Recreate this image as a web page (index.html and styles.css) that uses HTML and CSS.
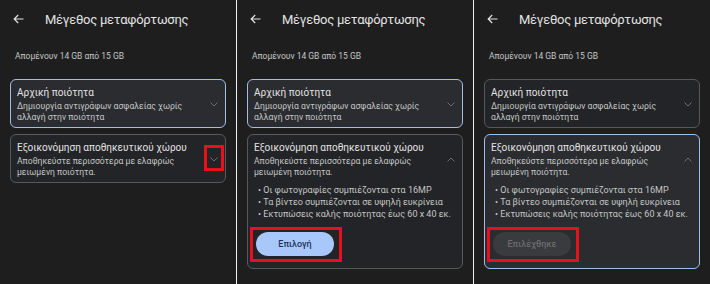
FILE: index.html
```html
<!DOCTYPE html>
<html lang="el">
<head>
    <meta charset="UTF-8">
    <meta name="viewport" content="width=device-width, initial-scale=1.0">
    <title>Μέγεθος μεταφόρτωσης</title>
    <link rel="stylesheet" href="styles.css">
</head>
<body>
    <!-- step 1: both collapsed, first selected -->
    <section class="screen">
        <div class="topbar">
            <svg class="back" width="11" height="10" viewBox="0 0 11 10"><path d="M10.5 5H1.2M5.2 1L1.2 5l4 4" fill="none" stroke="#e3e3e3" stroke-width="1.2"/></svg>
            <h1>Μέγεθος μεταφόρτωσης</h1>
        </div>
        <p class="quota">Απομένουν 14 GB από 15 GB</p>

        <div class="card selected">
            <div class="card-head">
                <div class="card-text">
                    <div class="card-title">Αρχική ποιότητα</div>
                    <div class="card-sub">Δημιουργία αντιγράφων ασφαλείας χωρίς αλλαγή στην ποιότητα</div>
                </div>
                <span class="chev"><svg width="8" height="5" viewBox="0 0 8 5"><path d="M0.5 0.5L4 4l3.5-3.5" fill="none" stroke="#6c6d70" stroke-width="1"/></svg></span>
            </div>
        </div>

        <div class="card">
            <div class="card-head">
                <div class="card-text">
                    <div class="card-title">Εξοικονόμηση αποθηκευτικού χώρου</div>
                    <div class="card-sub">Αποθηκεύστε περισσότερα με ελαφρώς μειωμένη ποιότητα.</div>
                </div>
                <span class="chev mark mark-chev"><svg width="8" height="5" viewBox="0 0 8 5"><path d="M0.5 0.5L4 4l3.5-3.5" fill="none" stroke="#6c6d70" stroke-width="1"/></svg></span>
            </div>
        </div>
    </section>

    <!-- step 2: second option expanded -->
    <section class="screen">
        <div class="topbar">
            <svg class="back" width="11" height="10" viewBox="0 0 11 10"><path d="M10.5 5H1.2M5.2 1L1.2 5l4 4" fill="none" stroke="#e3e3e3" stroke-width="1.2"/></svg>
            <h1>Μέγεθος μεταφόρτωσης</h1>
        </div>
        <p class="quota">Απομένουν 14 GB από 15 GB</p>

        <div class="card selected">
            <div class="card-head">
                <div class="card-text">
                    <div class="card-title">Αρχική ποιότητα</div>
                    <div class="card-sub">Δημιουργία αντιγράφων ασφαλείας χωρίς αλλαγή στην ποιότητα</div>
                </div>
                <span class="chev"><svg width="8" height="5" viewBox="0 0 8 5"><path d="M0.5 0.5L4 4l3.5-3.5" fill="none" stroke="#6c6d70" stroke-width="1"/></svg></span>
            </div>
        </div>

        <div class="card">
            <div class="card-head">
                <div class="card-text">
                    <div class="card-title">Εξοικονόμηση αποθηκευτικού χώρου</div>
                    <div class="card-sub">Αποθηκεύστε περισσότερα με ελαφρώς μειωμένη ποιότητα.</div>
                </div>
                <span class="chev"><svg width="8" height="5" viewBox="0 0 8 5"><path d="M0.5 4.5L4 1l3.5 3.5" fill="none" stroke="#6c6d70" stroke-width="1"/></svg></span>
            </div>
            <div class="card-body">
                <ul class="bullets">
                    <li>• Οι φωτογραφίες συμπιέζονται στα 16MP</li>
                    <li>• Τα βίντεο συμπιέζονται σε υψηλή ευκρίνεια</li>
                    <li>• Εκτυπώσεις καλής ποιότητας έως 60 x 40 εκ.</li>
                </ul>
                <button class="btn btn-primary mark mark-btn">Επιλογή</button>
            </div>
        </div>
    </section>

    <!-- step 3: second option selected -->
    <section class="screen">
        <div class="topbar">
            <svg class="back" width="11" height="10" viewBox="0 0 11 10"><path d="M10.5 5H1.2M5.2 1L1.2 5l4 4" fill="none" stroke="#e3e3e3" stroke-width="1.2"/></svg>
            <h1>Μέγεθος μεταφόρτωσης</h1>
        </div>
        <p class="quota">Απομένουν 14 GB από 15 GB</p>

        <div class="card">
            <div class="card-head">
                <div class="card-text">
                    <div class="card-title">Αρχική ποιότητα</div>
                    <div class="card-sub">Δημιουργία αντιγράφων ασφαλείας χωρίς αλλαγή στην ποιότητα</div>
                </div>
                <span class="chev"><svg width="8" height="5" viewBox="0 0 8 5"><path d="M0.5 0.5L4 4l3.5-3.5" fill="none" stroke="#6c6d70" stroke-width="1"/></svg></span>
            </div>
        </div>

        <div class="card selected">
            <div class="card-head">
                <div class="card-text">
                    <div class="card-title">Εξοικονόμηση αποθηκευτικού χώρου</div>
                    <div class="card-sub">Αποθηκεύστε περισσότερα με ελαφρώς μειωμένη ποιότητα.</div>
                </div>
                <span class="chev"><svg width="8" height="5" viewBox="0 0 8 5"><path d="M0.5 4.5L4 1l3.5 3.5" fill="none" stroke="#6c6d70" stroke-width="1"/></svg></span>
            </div>
            <div class="card-body">
                <ul class="bullets">
                    <li>• Οι φωτογραφίες συμπιέζονται στα 16MP</li>
                    <li>• Τα βίντεο συμπιέζονται σε υψηλή ευκρίνεια</li>
                    <li>• Εκτυπώσεις καλής ποιότητας έως 60 x 40 εκ.</li>
                </ul>
                <button class="btn btn-done mark mark-btn" disabled>Επιλέχθηκε</button>
            </div>
        </div>
    </section>
</body>
</html>
```

FILE: styles.css
```css
body {
    margin: 0;
    display: flex;
    height: 284px;
    overflow: hidden;
    background: #1e1e1f;
    font-family: Roboto, "Noto Sans", sans-serif;
}
.screen {
    width: 216px;
    height: 272px;
    padding: 12px 10px 0;
}
.screen + .screen {
    border-left: 1px solid #f0f0f0;
}
.topbar {
    display: flex;
    align-items: center;
    height: 16px;
    padding-left: 3px;
    gap: 21px;
}
.back {
    margin-top: -2px;
}
.topbar h1 {
    margin: 0;
    font-size: 13px;
    line-height: 16px;
    font-weight: 400;
    letter-spacing: -0.25px;
    color: #e3e3e3;
}
.quota {
    margin: 22.5px 0 0 5px;
    font-size: 8.5px;
    line-height: 11px;
    color: #c4c7c5;
}
.card {
    margin-top: 17.5px;
    border: 1px solid #58595c;
    border-radius: 6px;
    background: #232427;
}
.card + .card {
    margin-top: 6px;
}
.card.selected {
    border-color: #a3bde9;
    background: #2b2c30;
}
.card-head {
    display: flex;
    align-items: center;
    gap: 8px;
    padding: 6px 6px 5px;
}
.card-text {
    flex: 1;
}
.card-title {
    font-size: 10px;
    line-height: 13px;
    color: #e3e3e3;
    margin-bottom: 2px;
}
.card-sub {
    font-size: 8.6px;
    line-height: 10.5px;
    color: #c4c7c5;
}
.chev {
    width: 10px;
    height: 10px;
    display: flex;
    align-items: center;
    justify-content: center;
}
.card-body {
    padding: 1.5px 6px 12px;
}
.bullets {
    list-style: none;
    margin: 0;
    padding-left: 4px;
    font-size: 9px;
    line-height: 12.2px;
    color: #c4c7c5;
}
.btn {
    display: block;
    width: 78px;
    height: 24px;
    margin: 12px 0 0 2px;
    border: none;
    border-radius: 12px;
    font-family: Roboto, "Noto Sans", sans-serif;
    font-size: 9px;
    font-weight: 500;
}
.btn-primary {
    background: #a8c7fa;
    color: #1d3156;
}
.btn-done {
    background: #3a3b3e;
    color: #6a6b6e;
}

/* red annotation frames */
.mark {
    position: relative;
}
.mark::after {
    content: "";
    position: absolute;
    border: 3px solid #e8101a;
}
.mark-chev::after {
    top: -9px;
    bottom: -7px;
    left: -5px;
    right: -5px;
}
.mark-btn::after {
    top: -5px;
    bottom: -6px;
    left: -6px;
    right: -8px;
}
```
